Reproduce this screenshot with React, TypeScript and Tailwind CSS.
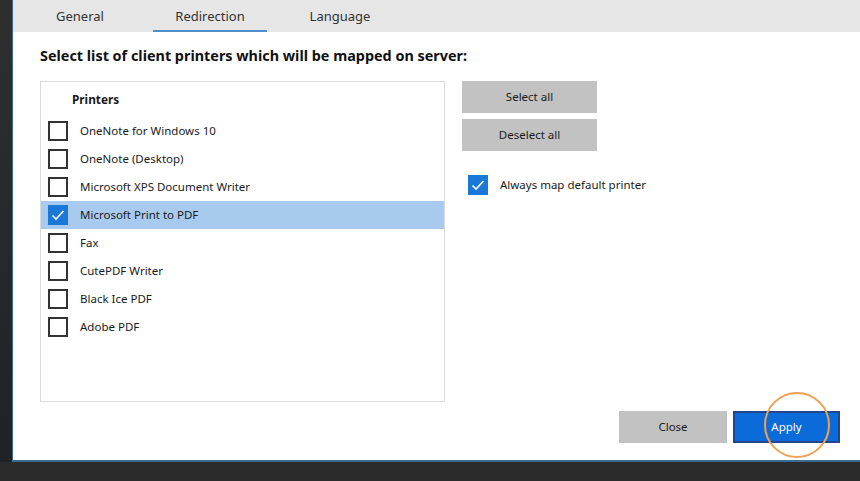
import { useState } from "react";

const printers = [
  "OneNote for Windows 10",
  "OneNote (Desktop)",
  "Microsoft XPS Document Writer",
  "Microsoft Print to PDF",
  "Fax",
  "CutePDF Writer",
  "Black Ice PDF",
  "Adobe PDF",
];

const font = { fontFamily: '"Segoe UI", "Noto Sans", "Open Sans", sans-serif' };

function Check({ checked }: { checked: boolean }) {
  if (checked) {
    return (
      <span className="flex h-[20px] w-[20px] shrink-0 items-center justify-center bg-[#1a78d6]">
        <svg width="16" height="16" viewBox="0 0 16 16" fill="none">
          <path d="M2.5 8.5l3.5 3.5 7.5-8" stroke="white" strokeWidth="1.6" />
        </svg>
      </span>
    );
  }
  return <span className="h-[20px] w-[20px] shrink-0 border-2 border-[#333333] bg-white" />;
}

export default function App() {
  const [selected, setSelected] = useState<string[]>(["Microsoft Print to PDF"]);
  const [mapDefault, setMapDefault] = useState(true);

  const toggle = (name: string) =>
    setSelected((prev) => (prev.includes(name) ? prev.filter((p) => p !== name) : [...prev, name]));

  return (
    <div className="flex h-[481px] w-[860px] flex-col overflow-hidden bg-[#2a2a2a] text-[#1a1a1a]" style={font}>
      <div className="flex h-[462px]">
        <div className="w-[12px] bg-gradient-to-b from-[#2e2e2e] via-[#262a2c] to-[#1e2224]" />
        <div className="flex flex-1 flex-col border-b-2 border-l border-[#3a6a92] bg-white">
          {/* tabs */}
          <div className="flex h-[32px] gap-[16px] bg-[#e6e6e6] pl-[10px]">
            {["General", "Redirection", "Language"].map((tab) => (
              <div
                key={tab}
                className={`flex w-[114px] items-center justify-center border-b-2 pt-[4px] text-[13px] text-[#333333] ${
                  tab === "Redirection" ? "border-[#4d8fc6]" : "border-transparent"
                }`}
              >
                {tab}
              </div>
            ))}
          </div>

          <div className="flex flex-1 flex-col pl-[27px]">
            <p className="mt-[14px] text-[14.4px] font-bold leading-[20px] text-[#111111]">
              Select list of client printers which will be mapped on server:
            </p>

            <div className="mt-[15px] flex gap-[17px]">
              {/* printer list */}
              <div className="h-[321px] w-[405px] border border-[#dadada] bg-white">
                <div className="pl-[31px] pt-[8px] text-[11.8px] font-bold leading-[18px]">Printers</div>
                <div className="mt-[9px]">
                  {printers.map((name) => {
                    const on = selected.includes(name);
                    return (
                      <div
                        key={name}
                        onClick={() => toggle(name)}
                        className={`flex h-[28px] items-center gap-[12px] pl-[7px] text-[11.5px] ${
                          on ? "bg-[#a8caee]" : ""
                        }`}
                      >
                        <Check checked={on} />
                        <span>{name}</span>
                      </div>
                    );
                  })}
                </div>
              </div>

              {/* side actions */}
              <div className="flex flex-col">
                <button className="h-[32px] w-[135px] bg-[#c2c2c2] text-[11.5px]">Select all</button>
                <button className="mt-[6px] h-[32px] w-[135px] bg-[#c2c2c2] text-[11.5px]">Deselect all</button>
                <label
                  className="mt-[24px] flex items-center gap-[12px] pl-[6px] text-[11.5px]"
                  onClick={() => setMapDefault(!mapDefault)}
                >
                  <Check checked={mapDefault} />
                  <span>Always map default printer</span>
                </label>
              </div>
            </div>

            <div className="mt-[9px] flex justify-end gap-[6px] pr-[20px]">
              <button className="h-[32px] w-[108px] bg-[#c2c2c2] text-[11.5px]">Close</button>
              <div className="relative">
                <button className="h-[32px] w-[107px] border-2 border-[#23458f] bg-[#0b6bd8] text-[11.5px] text-white">
                  Apply
                </button>
                <span className="pointer-events-none absolute left-[31px] top-[-19px] h-[66px] w-[66px] rounded-full border-2 border-[#f0a052]" />
              </div>
            </div>
          </div>
        </div>
      </div>
      <div className="flex-1 bg-[#2b2b2b]" />
    </div>
  );
}
